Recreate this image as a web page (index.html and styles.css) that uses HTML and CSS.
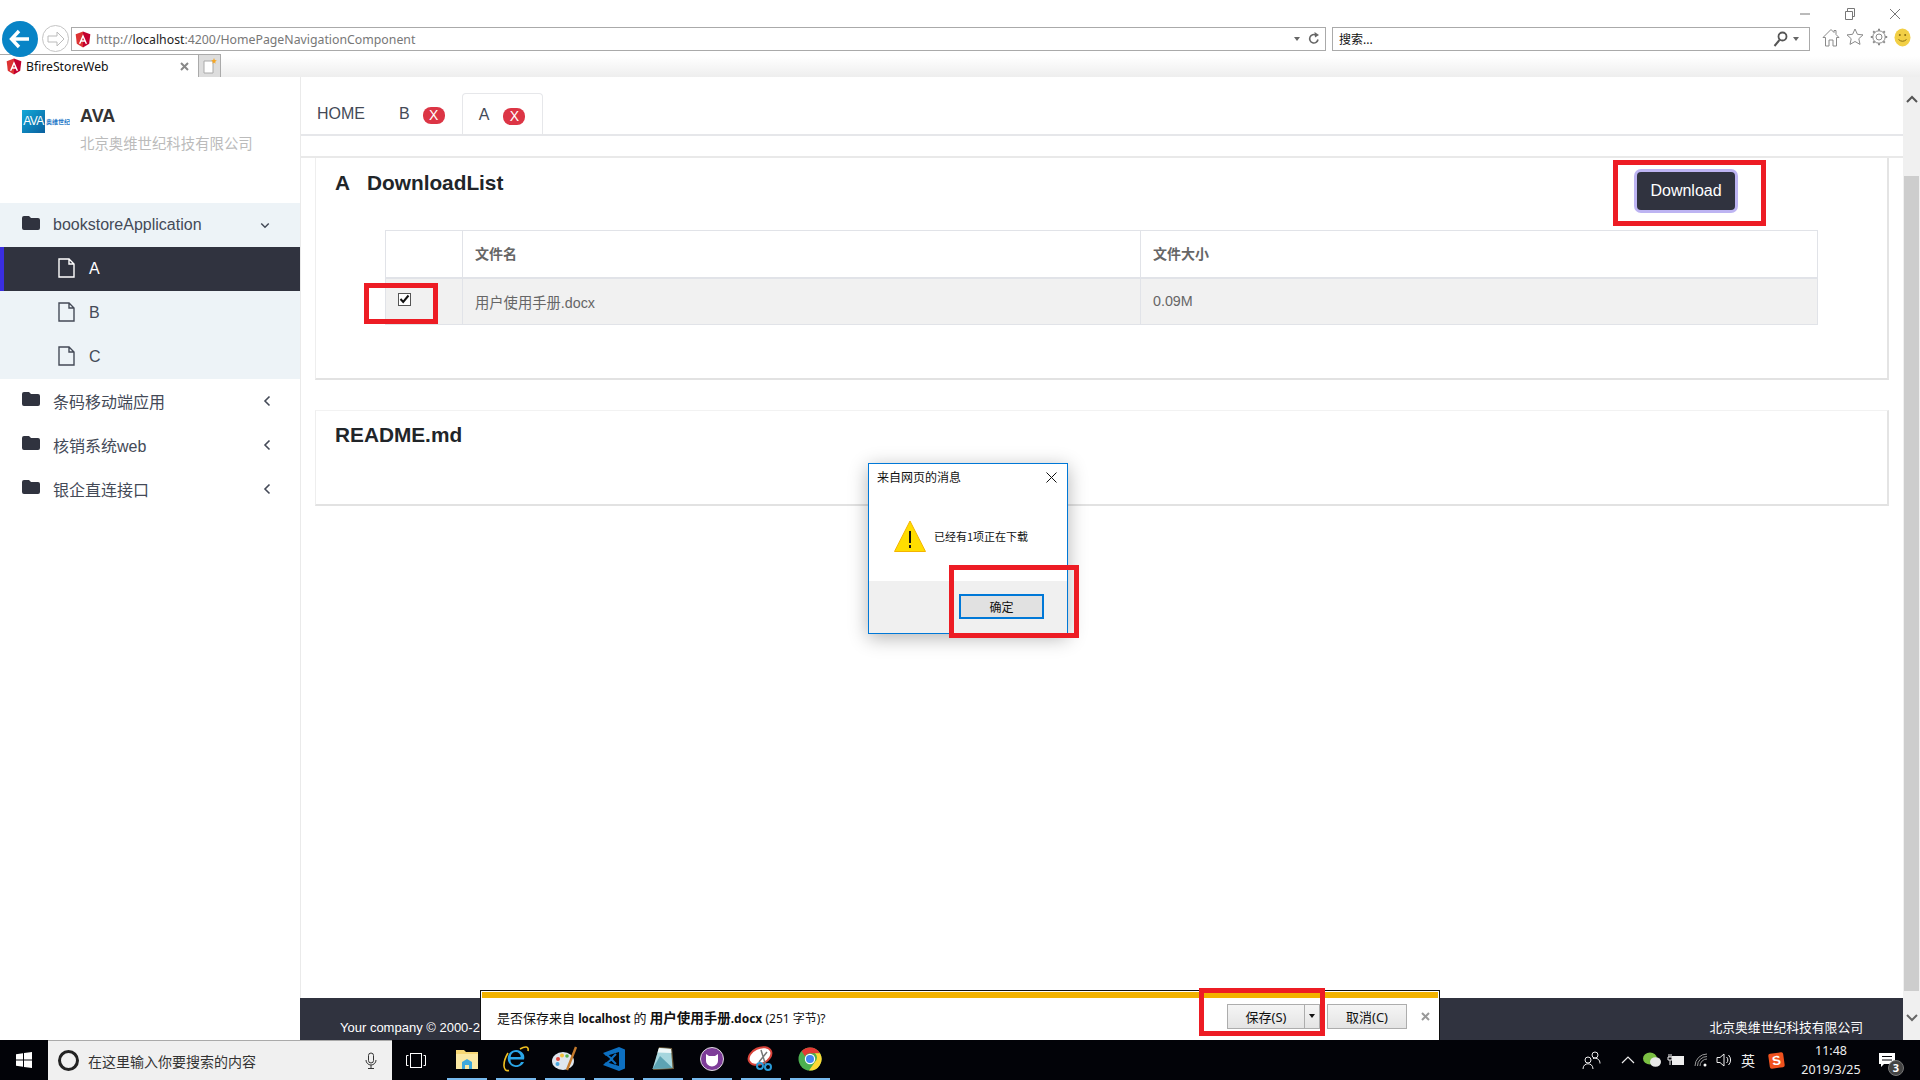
FILE: index.html
```html
<!DOCTYPE html>
<html lang="en">
<head>
    <meta charset="UTF-8">
    <meta name="viewport" content="width=device-width, initial-scale=1.0">
    <title>BfireStoreWeb</title>
    <link rel="stylesheet" href="styles.css">
</head>
<body>
    <svg class="defs" width="0" height="0">
        <symbol id="shield" viewBox="0 0 24 24">
            <polygon points="12,0 23,4 21.3,18.5 12,24" fill="#c3002f"/>
            <polygon points="12,0 1,4 2.7,18.5 12,24" fill="#dd3333"/>
            <path d="M12 4 L5.8 18.4 h2.4 l1.2-3.1 h5.2 l1.2 3.1 h2.4z M10.5 13.2 L12 9.4 l1.5 3.8z" fill="#fff" fill-rule="evenodd"/>
        </symbol>
        <symbol id="folder" viewBox="0 0 18 14">
            <path d="M2 0h5l2 2h7a2 2 0 0 1 2 2v8a2 2 0 0 1-2 2H2a2 2 0 0 1-2-2V2a2 2 0 0 1 2-2z" fill="#30333f"/>
        </symbol>
        <symbol id="file" viewBox="0 0 17 20">
            <path d="M1 1h10l5 5v13H1z M11 1v5h5" fill="none" stroke="currentColor" stroke-width="1.4"/>
        </symbol>
        <symbol id="chev-left" viewBox="0 0 8 12">
            <path d="M6.5 1.5 L2 6 l4.5 4.5" fill="none" stroke="#444a57" stroke-width="1.6"/>
        </symbol>
    </svg>

    <!-- IE window chrome -->
    <header class="chrome">
        <div class="win-controls">
            <svg class="win-btn" width="12" height="12" viewBox="0 0 12 12"><path d="M1 6h10" stroke="#777"/></svg>
            <svg class="win-btn" width="12" height="12" viewBox="0 0 12 12"><path d="M1.5 3.5h7v8h-7z M3.5 3.5v-3h7v8h-2" fill="none" stroke="#777"/></svg>
            <svg class="win-btn" width="12" height="12" viewBox="0 0 12 12"><path d="M1 1l10 10M11 1L1 11" stroke="#777"/></svg>
        </div>
        <div class="nav-row">
            <div class="back-btn">
                <svg width="22" height="20" viewBox="0 0 22 20"><path d="M10 2 L2.5 10 L10 18 M3 10 H20" fill="none" stroke="#fff" stroke-width="3.4"/></svg>
            </div>
            <div class="forward-btn">
                <svg width="18" height="16" viewBox="0 0 18 16"><path d="M10 1 l7 7 l-7 7 v-4 H1 V5 h9z" fill="none" stroke="#bbb" stroke-width="1"/></svg>
            </div>
            <div class="address-box">
                <svg class="fav" width="16" height="17"><use href="#shield"/></svg>
                <span class="url">http://<b>localhost</b>:4200/HomePageNavigationComponent</span>
                <span class="caret caret-gray"></span>
                <svg class="refresh" width="12" height="14" viewBox="0 0 12 14"><path d="M10 7.5 a4.2 4.2 0 1 1 -2-4.4" fill="none" stroke="#666" stroke-width="1.6"/><path d="M6.5 0 L11 3 L7 5.5z" fill="#666"/></svg>
            </div>
            <div class="search-box">
                <span class="search-text">搜索...</span>
                <svg width="15" height="16" viewBox="0 0 15 16"><circle cx="9.5" cy="5.5" r="4" fill="none" stroke="#555" stroke-width="1.8"/><path d="M6.5 9 L1.5 15" stroke="#555" stroke-width="2"/></svg>
                <span class="caret caret-gray"></span>
            </div>
            <div class="tool-icons">
                <svg width="18" height="19" viewBox="0 0 18 19"><path d="M1 9.5 L9 1.5 l3 3 V2.5 h2 v4 l3 3 h-2.5 V18 h-3.5 v-6 H7 v6 H3.5 V9.5z" fill="none" stroke="#8a8a8a"/></svg>
                <svg width="18" height="18" viewBox="0 0 18 18"><path d="M9 1 l2.4 5.3 5.6.6 -4.2 3.8 1.2 5.7 L9 13.500 4 16.400 l1.2-5.700 L1 6.900 l5.600-.6z" fill="none" stroke="#8a8a8a"/></svg>
                <svg width="18" height="18" viewBox="0 0 18 18"><circle cx="9" cy="9" r="3" fill="none" stroke="#8a8a8a"/><circle cx="9" cy="9" r="6.2" fill="none" stroke="#8a8a8a"/><path d="M9 .8v2M9 15.2v2M.8 9h2M15.2 9h2M3.2 3.2l1.4 1.4M13.4 13.4l1.4 1.4M14.8 3.2l-1.4 1.4M4.6 13.4l-1.4 1.4" stroke="#8a8a8a" stroke-width="2"/></svg>
                <svg width="17" height="19" viewBox="0 0 17 19"><ellipse cx="8.5" cy="9.5" rx="8" ry="9" fill="#f2cf45"/><circle cx="5.8" cy="7" r="1" fill="#8a6d10"/><circle cx="11.2" cy="7" r="1" fill="#8a6d10"/><path d="M4.5 11.5 q4 3.5 8 0" fill="none" stroke="#8a6d10"/></svg>
            </div>
        </div>
        <div class="tab-row">
            <div class="ie-tab">
                <svg width="16" height="17"><use href="#shield"/></svg>
                <span class="ie-tab-title">BfireStoreWeb</span>
                <svg class="ie-tab-close" width="9" height="9" viewBox="0 0 9 9"><path d="M1 1l7 7M8 1L1 8" stroke="#888" stroke-width="2"/></svg>
            </div>
            <div class="new-tab">
                <svg width="14" height="16" viewBox="0 0 14 16"><path d="M1 3h9v12H1z" fill="#fff" stroke="#aaa"/><path d="M11 0l.8 2 2 .5-1.6 1.2.4 2-1.6-1.2-1.6 1.2.4-2L8.2 2.5l2-.5z" fill="#f5a623"/></svg>
            </div>
        </div>
    </header>

    <div class="viewport">
        <aside class="sidebar">
            <div class="brand">
                <div class="brand-logo">
                    <span class="logo-tile">AVA</span>
                    <span class="logo-name">奥维世纪</span>
                </div>
                <div>
                    <div class="brand-title">AVA</div>
                    <div class="brand-sub">北京奥维世纪科技有限公司</div>
                </div>
            </div>
            <nav>
                <div class="menu-item open">
                    <svg class="folder" width="18" height="14"><use href="#folder"/></svg>
                    <span class="menu-label">bookstoreApplication</span>
                    <svg class="chev-down" width="10" height="7" viewBox="0 0 12 8"><path d="M1.500 1.500 L6 6 l4.500-4.500" fill="none" stroke="#444a57" stroke-width="1.800"/></svg>
                </div>
                <div class="sub-item active">
                    <svg width="17" height="20"><use href="#file"/></svg>
                    <span>A</span>
                </div>
                <div class="sub-item">
                    <svg width="17" height="20"><use href="#file"/></svg>
                    <span>B</span>
                </div>
                <div class="sub-item">
                    <svg width="17" height="20"><use href="#file"/></svg>
                    <span>C</span>
                </div>
                <div class="menu-item">
                    <svg class="folder" width="18" height="14"><use href="#folder"/></svg>
                    <span class="menu-label">条码移动端应用</span>
                    <svg width="8" height="12"><use href="#chev-left"/></svg>
                </div>
                <div class="menu-item">
                    <svg class="folder" width="18" height="14"><use href="#folder"/></svg>
                    <span class="menu-label">核销系统web</span>
                    <svg width="8" height="12"><use href="#chev-left"/></svg>
                </div>
                <div class="menu-item">
                    <svg class="folder" width="18" height="14"><use href="#folder"/></svg>
                    <span class="menu-label">银企直连接口</span>
                    <svg width="8" height="12"><use href="#chev-left"/></svg>
                </div>
            </nav>
        </aside>

        <main class="main">
            <div class="tabs">
                <div class="tab">HOME</div>
                <div class="tab">B<span class="tab-badge">X</span></div>
                <div class="tab tab-active">A<span class="tab-badge">X</span></div>
            </div>
            <div class="content">
                <section class="card">
                    <div class="card-head">
                        <h2 class="card-title"><span class="title-key">A</span>DownloadList</h2>
                        <button class="download-btn" type="button">Download</button>
                    </div>
                    <table class="file-table">
                        <thead>
                            <tr>
                                <th class="col-check"></th>
                                <th class="col-name">文件名</th>
                                <th>文件大小</th>
                            </tr>
                        </thead>
                        <tbody>
                            <tr>
                                <td class="cell-check"><span class="checkbox"><svg width="11" height="10" viewBox="0 0 11 10"><path d="M1.5 5 L4.2 8 L9.5 1.5" fill="none" stroke="#111" stroke-width="2"/></svg></span></td>
                                <td>用户使用手册.docx</td>
                                <td>0.09M</td>
                            </tr>
                        </tbody>
                    </table>
                </section>
                <section class="card card-readme">
                    <h2 class="card-title">README.md</h2>
                </section>
            </div>
            <footer class="footer">
                <span>Your company © 2000-2019</span>
                <span class="footer-right">北京奥维世纪科技有限公司</span>
            </footer>
        </main>

        <div class="scrollbar">
            <div class="scroll-up">
                <svg width="12" height="8" viewBox="0 0 12 8"><path d="M1 7 L6 2 l5 5" fill="none" stroke="#555" stroke-width="2"/></svg>
            </div>
            <div class="scroll-thumb"></div>
            <div class="scroll-down">
                <svg width="12" height="8" viewBox="0 0 12 8"><path d="M1 1 l5 5 l5-5" fill="none" stroke="#666" stroke-width="2"/></svg>
            </div>
        </div>
    </div>

    <!-- Windows taskbar -->
    <div class="taskbar">
        <div class="start">
            <svg width="16" height="16" viewBox="0 0 16 16"><path d="M0 2.2 L7 1.2 V7.5 H0z M8 1 L16 0 V7.5 H8z M0 8.5 H7 V14.8 L0 13.8z M8 8.5 H16 V16 L8 15z" fill="#fff"/></svg>
        </div>
        <div class="task-search">
            <span class="cortana"></span>
            <span class="task-search-text">在这里输入你要搜索的内容</span>
            <svg width="12" height="18" viewBox="0 0 12 18"><rect x="3.5" y="1" width="5" height="10" rx="2.5" fill="none" stroke="#333"/><path d="M1 8 a5 5 0 0 0 10 0 M6 13v3 M3 16.5h6" fill="none" stroke="#333"/></svg>
        </div>
        <div class="task-view">
            <svg width="20" height="15" viewBox="0 0 20 15"><rect x="4.5" y=".5" width="11" height="14" fill="none" stroke="#fff"/><path d="M2.5 2.5H.5v10h2M17.500 2.500h2v10h-2" fill="none" stroke="#fff"/></svg>
        </div>
        <div class="apps">
            <div class="app">
                <svg width="24" height="22" viewBox="0 0 24 22"><path d="M1 2h8l2 2h12v17H1z" fill="#f7d774"/><path d="M1 6h22v15H1z" fill="#fbe9a4"/><path d="M7 21v-7l5-3 5 3v7h-3v-4h-4v4z" fill="#3fa9dc"/></svg>
            </div>
            <div class="app">
                <svg width="26" height="26" viewBox="0 0 26 26"><path d="M21 13.500H7.500a5.500 5.500 0 0 0 10.500 2.500h3a8.500 8.500 0 1 1 0-7a9 9 0 0 1 0 4.500zM7.700 11h10a5 5 0 0 0-10 0z" fill="#2aa6e8" fill-rule="evenodd"/><path d="M5 7 C-1 17 0 26 6 24.500 M17 3 c5-3 9-3 8 2" fill="none" stroke="#f0c020" stroke-width="1.600"/></svg>
            </div>
            <div class="app">
                <svg width="28" height="28" viewBox="0 0 28 28"><ellipse cx="12" cy="16" rx="11" ry="9" fill="#dfe6ee"/><circle cx="7" cy="14" r="2" fill="#e0483e"/><circle cx="11" cy="10.500" r="2" fill="#f5c13d"/><circle cx="6.500" cy="19" r="2" fill="#4aa8e0"/><circle cx="16" cy="11" r="1.800" fill="#58b24e"/><path d="M25 2 L16 25" stroke="#c47a2c" stroke-width="2.400"/></svg>
            </div>
            <div class="app">
                <svg width="24" height="26" viewBox="0 0 24 26"><path d="M17 1 L23 3.500 V22.500 L17 25 L1 19 L4 16 L17 20 V6 L4 10 L1 7z" fill="#0d6fc0"/><path d="M5 9 L10 13 L5 17 M14 8 L9 13 L14 18" fill="none" stroke="#0d6fc0" stroke-width="2"/></svg>
            </div>
            <div class="app">
                <svg width="24" height="26" viewBox="0 0 24 26"><path d="M8 1 L21 2 L23 23 L2 24z" fill="#6b5a3a"/><path d="M8 2 L20 3 L21.500 22 L1.500 23z" fill="#a6d6de"/><path d="M8 2 L20 3 L20.300 7 L6.500 6.500z" fill="#eef7f8"/><path d="M1.500 23 L9 10 L21.500 22z" fill="#5da3b3"/></svg>
            </div>
            <div class="app">
                <svg width="24" height="24" viewBox="0 0 24 24"><circle cx="12" cy="12" r="11.500" fill="#7d3c98" stroke="#ddd" stroke-width="1"/><path d="M6 7 L9 9 h6 l3-2 v7 a5 4.500 0 0 1-12 0z" fill="#fff"/></svg>
            </div>
            <div class="app">
                <svg width="28" height="26" viewBox="0 0 28 26"><ellipse cx="13" cy="10" rx="12" ry="8" transform="rotate(-25 13 10)" fill="#fff" stroke="#d9433a" stroke-width="2"/><path d="M14 4 L19 20 M20 6 L12 16" stroke="#777" stroke-width="1.500"/><circle cx="21" cy="21" r="3" fill="none" stroke="#2a9bd8" stroke-width="2"/><circle cx="13" cy="20" r="3" fill="none" stroke="#2a9bd8" stroke-width="2"/></svg>
            </div>
            <div class="app">
                <svg width="24" height="24" viewBox="0 0 24 24"><circle cx="12" cy="12" r="11.500" fill="#4caf50"/><path d="M12 .500 a11.500 11.500 0 0 1 10 5.750 H12 a5.750 5.750 0 0 0-5 2.900 L3.700 4.200 A11.500 11.500 0 0 1 12 .500z" fill="#e53935"/><path d="M22 6.250 A11.500 11.500 0 0 1 11 23.500 L16.900 15 A5.750 5.750 0 0 0 17 6.250z" fill="#fdd835"/><circle cx="12" cy="12" r="5.200" fill="#fff"/><circle cx="12" cy="12" r="4" fill="#4285f4"/></svg>
            </div>
        </div>
        <div class="tray">
            <svg class="tray-people" width="20" height="20" viewBox="0 0 20 20"><circle cx="13" cy="5" r="3" fill="none" stroke="#eee"/><circle cx="6" cy="10" r="3" fill="none" stroke="#eee"/><path d="M1 19 c0-7 10-7 10 0 M11 8.500 c4-1 7 1 7 5" fill="none" stroke="#eee"/></svg>
            <div class="tray-item"><svg width="14" height="8" viewBox="0 0 14 8"><path d="M1 7 L7 1 l6 6" fill="none" stroke="#eee" stroke-width="1.200"/></svg></div>
            <div class="tray-item"><svg width="18" height="16" viewBox="0 0 18 16"><ellipse cx="7" cy="6.500" rx="7" ry="6" fill="#7bc043"/><ellipse cx="12.500" cy="10" rx="5.500" ry="4.800" fill="#e8e8e8"/></svg></div>
            <div class="tray-item tray-batt"><svg width="18" height="12" viewBox="0 0 18 12"><rect x="5.500" y="2.500" width="11" height="8" fill="#eee" stroke="#eee"/><path d="M2 0v3 M4 0v3 M1 3h4v3H1z M3 6v5" fill="none" stroke="#eee"/></svg></div>
            <div class="tray-item tray-wifi"><svg width="14" height="14" viewBox="0 0 14 14"><path d="M1 13 a12 12 0 0 1 12-12 M3.500 13 a9.500 9.500 0 0 1 9.500-9.500 M6 13 a7 7 0 0 1 7-7" fill="none" stroke="#999"/><circle cx="11" cy="12" r="1.500" fill="#fff"/></svg></div>
            <div class="tray-item"><svg width="16" height="14" viewBox="0 0 16 14"><path d="M1 4.500h3l4-3.500v12l-4-3.500H1z M10.500 4 a4 4 0 0 1 0 6 M12.500 2 a7 7 0 0 1 0 10" fill="none" stroke="#eee"/></svg></div>
            <div class="tray-item tray-lang">英</div>
            <div class="tray-item tray-sogou"><span class="sogou">S</span></div>
            <div class="clock">
                <span>11:48</span>
                <span>2019/3/25</span>
            </div>
            <div class="notify">
                <svg width="16" height="14" viewBox="0 0 16 14"><path d="M0 0h16v11H5l-3 3v-3H0z" fill="#fff"/><path d="M3 3.500h10M3 7h10" stroke="#020308"/></svg>
                <span class="notify-badge">3</span>
            </div>
        </div>
    </div>

    <!-- overlays: alert, download bar, red annotation boxes -->
    <div class="dialog">
        <div class="dialog-top">
            <div class="dialog-head">
                <span>来自网页的消息</span>
                <svg width="11" height="11" viewBox="0 0 11 11"><path d="M.5 .5l10 10M10.500 .5l-10 10" stroke="#111"/></svg>
            </div>
            <div class="dialog-msg">
                <svg width="32" height="32" viewBox="0 0 32 32"><path d="M16 1 L31.500 31.500 H.5z" fill="#ffdd00" stroke="#f4b400"/><path d="M16 11v12M16 25v3" stroke="#111" stroke-width="2"/></svg>
                <span>已经有1项正在下载</span>
            </div>
        </div>
        <div class="dialog-foot">
            <button class="dialog-ok" type="button">确定</button>
        </div>
    </div>

    <div class="download-bar">
        <div class="download-strip"></div>
        <div class="download-body">
            <span class="download-text"><span class="cjk">是否保存来自</span> <b>localhost</b> <span class="cjk">的</span> <b class="cjk">用户使用手册</b><b class="ext">.docx</b> (251 字节)?</span>
            <div class="save-group">
                <button class="ie-btn save-btn" type="button">保存(S)</button>
                <button class="ie-btn save-more" type="button"><span class="caret caret-dark"></span></button>
            </div>
            <button class="ie-btn cancel-btn" type="button">取消(C)</button>
            <svg class="download-close" width="9" height="9" viewBox="0 0 9 9"><path d="M1 1l7 7M8 1L1 8" stroke="#999" stroke-width="2"/></svg>
        </div>
    </div>

    <div class="mark mark-check"></div>
    <div class="mark mark-download"></div>
    <div class="mark mark-ok"></div>
    <div class="mark mark-save"></div>
</body>
</html>
```

FILE: styles.css
```css
/* Reset & Base Styles */
* {
    box-sizing: border-box;
    margin: 0;
    padding: 0;
}

html, body {
    height: 100%;
    overflow: hidden;
}

body {
    position: relative;
    display: flex;
    flex-direction: column;
    background: #fff;
    font-family: "Liberation Sans", "Noto Sans CJK SC", sans-serif;
    color: #30333f;
}

.defs {
    position: absolute;
}

button {
    font-family: inherit;
}

/* Browser chrome */
.chrome {
    height: 77px;
    flex: none;
    font-family: "Noto Sans", "Noto Sans CJK SC", sans-serif;
}

.win-controls {
    height: 27px;
    display: flex;
    justify-content: flex-end;
    align-items: center;
    gap: 33px;
    padding-right: 19px;
}

.nav-row {
    height: 27px;
    display: flex;
    align-items: flex-start;
}

.back-btn {
    width: 36px;
    height: 36px;
    margin: -6px 0 0 2px;
    border-radius: 50%;
    background: #0884c6;
    display: flex;
    align-items: center;
    justify-content: center;
    z-index: 1;
}

.forward-btn {
    width: 27px;
    height: 27px;
    margin: -2px 0 0 4px;
    border: 1px solid #c4c4c4;
    border-radius: 50%;
    display: flex;
    align-items: center;
    justify-content: center;
}

.address-box {
    width: 1255px;
    height: 24px;
    margin-left: 2px;
    border: 1px solid #aaa;
    display: flex;
    align-items: center;
    padding: 0 5px 0 3px;
    font-size: 12px;
}

.fav {
    flex: none;
}

.url {
    margin-left: 5px;
    flex: 1;
    color: #777;
    font-size: 12.3px;
}

.url b {
    font-weight: 400;
    color: #222;
}

.caret {
    display: inline-block;
    width: 0;
    height: 0;
    border-left: 3.5px solid transparent;
    border-right: 3.5px solid transparent;
}

.caret-gray {
    border-top: 4px solid #666;
}

.caret-dark {
    border-top: 4px solid #111;
}

.refresh {
    margin-left: 8px;
}

.search-box {
    width: 478px;
    height: 24px;
    margin-left: 6px;
    border: 1px solid #aaa;
    display: flex;
    align-items: center;
    padding: 0 10px 0 6px;
    gap: 5px;
    font-size: 12px;
    color: #111;
}

.search-text {
    flex: 1;
}

.tool-icons {
    display: flex;
    gap: 6px;
    margin: 1px 0 0 12px;
}

.tab-row {
    height: 23px;
    display: flex;
    background: linear-gradient(to bottom, #fff 10%, #eee 100%);
}

.ie-tab {
    width: 199px;
    background: #fff;
    border-top: 1px solid #aaa;
    border-right: 1px solid #aaa;
    display: flex;
    align-items: center;
    padding: 0 9px 0 6px;
    font-size: 12.2px;
    color: #111;
}

.ie-tab-title {
    flex: 1;
    margin-left: 4px;
}

.new-tab {
    width: 22px;
    background: #ddd;
    border-top: 1px solid #aaa;
    border-right: 1px solid #aaa;
    display: flex;
    align-items: center;
    justify-content: center;
}

/* Page area */
.viewport {
    flex: 1;
    min-height: 0;
    display: flex;
}

.sidebar {
    width: 301px;
    flex: none;
    border-right: 1px solid #eaeaea;
    font-size: 16px;
}

.brand {
    height: 126px;
    display: flex;
    padding: 29px 0 0 22px;
}

.brand-logo {
    width: 48px;
    height: 23px;
    margin: 4px 10px 0 0;
    display: flex;
    align-items: center;
    overflow: hidden;
}

.logo-tile {
    width: 23px;
    height: 23px;
    flex: none;
    background: linear-gradient(135deg, #12a9d8, #0a5f9e);
    color: #fff;
    font-size: 12px;
    line-height: 23px;
    white-space: nowrap;
    text-align: center;
    letter-spacing: -0.5px;
}

.logo-name {
    font-size: 6px;
    color: #1e78c8;
    white-space: nowrap;
    margin-left: 1px;
    font-weight: 700;
}

.brand-title {
    font-size: 18px;
    font-weight: 700;
    line-height: 20px;
    color: #333;
}

.brand-sub {
    margin-top: 8px;
    font-size: 14.4px;
    line-height: 20px;
    color: #bbb;
}

.menu-item {
    height: 44px;
    display: flex;
    align-items: center;
    padding: 0 0 0 22px;
    color: #444a57;
}

.menu-item.open {
    background: #edf3f7;
}

.folder {
    flex: none;
    margin-top: -4px;
}

.menu-label {
    width: 210px;
    margin-left: 13px;
}

.chev-down {
    margin-left: -3px;
}

.sub-item {
    height: 44px;
    display: flex;
    align-items: center;
    padding-left: 58px;
    gap: 14px;
    background: #edf3f7;
    color: #444a57;
}

.sub-item svg {
    margin-top: -2px;
}

.sub-item.active {
    background: #30333f;
    color: #fff;
    border-left: 4px solid #3a2ee0;
    padding-left: 54px;
}

.main {
    flex: 1;
    min-width: 0;
    display: flex;
    flex-direction: column;
}

.tabs {
    height: 59px;
    flex: none;
    display: flex;
    align-items: flex-end;
    gap: 2px;
    border-bottom: 2px solid #e6e7ea;
    font-size: 16px;
    color: #444a57;
}

.tab {
    height: 41px;
    padding: 12px 16px 0;
    line-height: 18px;
    display: flex;
    align-items: flex-start;
}

.tab-active {
    margin-left: -1px;
    padding: 12px 17px 0 16px;
    border: 1px solid #e6e7ea;
    border-bottom: none;
    border-radius: 4px 4px 0 0;
}

.tab-active .tab-badge {
    margin-left: 14px;
}

.tab-badge {
    width: 22px;
    height: 17px;
    margin: 2px 0 0 13px;
    border-radius: 8px;
    background: #dc3545;
    color: #fff;
    font-size: 14px;
    line-height: 17px;
    text-align: center;
}

.content {
    flex: 1;
    min-height: 0;
    margin-top: 20px;
    padding: 0 14px;
    border-top: 2px solid #e9e9e9;
}

.card {
    padding: 13px 20px 53px 19px;
    border: 1px solid #eee;
    border-top: none;
    border-right: 2px solid #e4e4e4;
    border-bottom: 2px solid #e2e2e2;
}

.card-readme {
    height: 96px;
    margin-top: 30px;
    padding-top: 12px;
    border-top: 1px solid #f2f2f2;
}

.card-head {
    height: 39px;
    display: flex;
    justify-content: space-between;
    align-items: flex-start;
    margin-bottom: 20px;
}

.card-title {
    font-size: 20.8px;
    line-height: 24px;
    font-weight: 700;
    color: #212529;
}

.title-key {
    margin-right: 17px;
}

.download-btn {
    width: 98px;
    height: 38px;
    margin: 1px 132px 0 0;
    border: none;
    border-radius: 4px;
    background: #30333f;
    box-shadow: 0 0 0 3px #bdb4f2;
    color: #fff;
    font-size: 16px;
}

.file-table {
    width: 1433px;
    margin-left: 50px;
    border-collapse: collapse;
    font-size: 14.3px;
    color: #666;
    table-layout: fixed;
}

.file-table th,
.file-table td {
    height: 47px;
    padding: 0 10px 0 12px;
    border: 1px solid #e1e3e8;
    text-align: left;
}

.file-table thead th {
    border-bottom-width: 2px;
    padding-bottom: 2px;
    font-size: 14px;
    font-weight: 700;
}

.file-table tbody tr {
    background: #f1f1f1;
}

.col-check {
    width: 77px;
}

.col-name {
    width: 678px;
}

.file-table .cell-check {
    padding: 0 0 0 12px;
    vertical-align: top;
}

.checkbox {
    display: flex;
    width: 13px;
    height: 13px;
    margin-top: 14px;
    border: 1px solid #555;
    background: #fff;
    align-items: center;
    justify-content: center;
}

.footer {
    height: 42px;
    flex: none;
    margin-left: -1px;
    background: #30333f;
    color: #fff;
    display: flex;
    justify-content: space-between;
    align-items: flex-end;
    padding: 0 40px 3px 40px;
    font-size: 13px;
    line-height: 18px;
}

.footer-right {
    font-size: 12.8px;
}

.scrollbar {
    width: 17px;
    flex: none;
    background: #f0f0f0;
    display: flex;
    flex-direction: column;
    align-items: center;
}

.scrollbar svg {
    display: block;
}

.scroll-up {
    height: 99px;
    flex: none;
    padding-top: 18px;
}

.scroll-thumb {
    width: 15px;
    flex: 1;
    background: #cdcdcd;
}

.scroll-down {
    height: 49px;
    flex: none;
    padding-top: 23px;
}

/* Windows taskbar */
.taskbar {
    height: 40px;
    flex: none;
    display: flex;
    background: #020308;
    color: #eee;
    font-family: "Noto Sans", "Noto Sans CJK SC", sans-serif;
}

.start {
    width: 48px;
    display: flex;
    align-items: center;
    justify-content: center;
}

.task-search {
    width: 344px;
    background: #f0f0f0;
    border-top: 1px solid #aaa;
    display: flex;
    align-items: center;
    padding: 0 15px 0 10px;
    font-size: 14px;
    color: #333;
}

.cortana {
    width: 21px;
    height: 21px;
    flex: none;
    border: 3px solid #222;
    border-radius: 50%;
}

.task-search-text {
    flex: 1;
    margin-left: 9px;
}

.task-view {
    width: 48px;
    display: flex;
    align-items: center;
    justify-content: center;
}

.apps {
    display: flex;
    gap: 9px;
    margin-left: 7px;
}

.app {
    width: 40px;
    height: 40px;
    display: flex;
    align-items: center;
    justify-content: center;
    padding-bottom: 1px;
    border-bottom: 2px solid #76b9ed;
}

.tray {
    margin-left: auto;
    display: flex;
    align-items: center;
    padding-right: 14px;
}

.tray-people {
    margin-right: 14px;
}

.tray-item {
    width: 24px;
    display: flex;
    align-items: center;
    justify-content: center;
}

.tray-batt {
    margin-right: 2px;
}

.tray-wifi {
    width: 22px;
}

.tray-lang {
    font-size: 14px;
    margin-right: 4px;
}

.tray-sogou {
    margin-right: 8px;
}

.sogou {
    width: 15px;
    height: 15px;
    background: #f0521e;
    color: #fff;
    border-radius: 2px;
    font-family: "Liberation Sans", sans-serif;
    font-size: 13px;
    font-weight: 700;
    line-height: 15px;
    text-align: center;
    transform: rotate(-8deg);
}

.clock {
    width: 70px;
    margin-right: 2px;
    display: flex;
    flex-direction: column;
    align-items: center;
    font-size: 12.5px;
    line-height: 19px;
}

.notify {
    position: relative;
    width: 38px;
    display: flex;
    justify-content: center;
}

.notify-badge {
    position: absolute;
    left: 20px;
    top: 7px;
    width: 16px;
    height: 16px;
    border-radius: 50%;
    background: #444;
    border: 1px solid #777;
    color: #fff;
    font-size: 11px;
    font-weight: 700;
    line-height: 14px;
    text-align: center;
}

/* Alert dialog */
.dialog {
    position: absolute;
    left: 868px;
    top: 463px;
    width: 200px;
    height: 171px;
    display: flex;
    flex-direction: column;
    background: #fff;
    border: 1px solid #0078d7;
    box-shadow: 0 4px 18px rgba(0, 0, 0, 0.3);
    font-family: "Noto Sans CJK SC", sans-serif;
    font-size: 12px;
    color: #111;
}

.dialog-top {
    height: 117px;
    flex: none;
}

.dialog-head {
    display: flex;
    justify-content: space-between;
    align-items: center;
    padding: 4px 10px 0 8px;
    line-height: 18px;
}

.dialog-msg {
    display: flex;
    align-items: center;
    gap: 8px;
    padding: 34px 0 0 25px;
    font-size: 11px;
}

.dialog-foot {
    flex: 1;
    background: #f0f0f0;
    padding: 13px 0 0 90px;
}

.dialog-ok {
    width: 85px;
    height: 25px;
    background: #e1e1e1;
    border: 2px solid #0078d7;
    font-size: 12px;
    font-family: "Noto Sans CJK SC", sans-serif;
    color: #111;
}

/* Download notification bar */
.download-bar {
    position: absolute;
    left: 480px;
    top: 990px;
    width: 960px;
    height: 50px;
    background: #fff;
    border-top: 1px solid #111;
    border-left: 1px solid #111;
    border-right: 1px solid #111;
    padding: 1px 1px 0;
    font-family: "Noto Sans", "Noto Sans CJK SC", sans-serif;
    font-size: 12px;
    color: #111;
}

.download-strip {
    height: 6px;
    background: #f2b200;
}

.download-body {
    height: 41px;
    display: flex;
    align-items: center;
    padding: 0 8px 5px 15px;
}

.download-text {
    flex: 1;
    margin-top: 2px;
}

.download-text b {
    font-size: 11.5px;
}

.download-text .cjk {
    font-size: 13px;
}

.download-text b.cjk {
    font-size: 13.5px;
}

.download-text .ext {
    font-size: 12px;
}

.save-group {
    display: flex;
}

.ie-btn {
    height: 25px;
    border: 1px solid #adadad;
    background: linear-gradient(to bottom, #f5f5f5, #e4e4e4);
    font-size: 13px;
    font-family: "Noto Sans", "Noto Sans CJK SC", sans-serif;
    color: #111;
}

.save-btn {
    width: 78px;
}

.save-more {
    width: 16px;
    margin-left: -1px;
    display: flex;
    align-items: center;
    justify-content: center;
}

.cancel-btn {
    width: 80px;
    margin: 0 14px 0 7px;
}

/* Red annotation boxes */
.mark {
    position: absolute;
    border: 5px solid #ed1c24;
}

.mark-check {
    left: 364px;
    top: 283px;
    width: 74px;
    height: 41px;
}

.mark-download {
    left: 1613px;
    top: 160px;
    width: 153px;
    height: 66px;
}

.mark-ok {
    left: 949px;
    top: 565px;
    width: 130px;
    height: 73px;
}

.mark-save {
    left: 1199px;
    top: 988px;
    width: 126px;
    height: 48px;
}
```
